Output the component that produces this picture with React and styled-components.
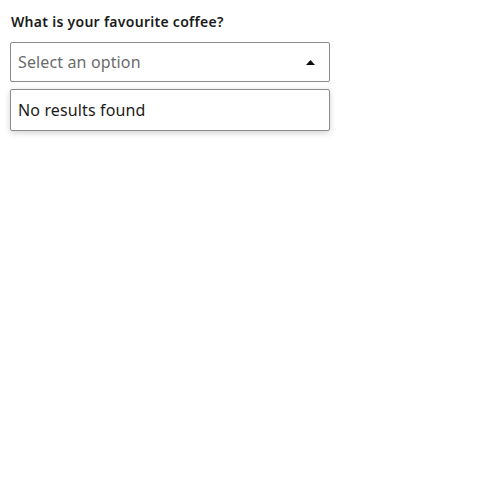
import React from "react";
import styled, { createGlobalStyle } from "styled-components";

const Global = createGlobalStyle`
  body { margin: 0; background: #fff; font-family: "Noto Sans", "Open Sans", sans-serif; }
`;

const Page = styled.div`
  padding: 12px 10px;
  width: 320px;
`;

const Label = styled.label`
  display: block;
  font-size: 14px;
  font-weight: 600;
  color: #1b1b1b;
  line-height: 20px;
  letter-spacing: 0.28px;
  margin-bottom: 10px;
  padding-left: 1px;
`;

const Control = styled.div`
  box-sizing: border-box;
  height: 40px;
  border: 1px solid #8c8c8c;
  border-radius: 2px;
  display: flex;
  align-items: center;
  justify-content: space-between;
  padding: 0 14px 0 7px;
`;

const Placeholder = styled.span`
  font-size: 16px;
  letter-spacing: 0.13px;
  color: #6b6b6b;
`;

const Menu = styled.div`
  box-sizing: border-box;
  margin-top: 7px;
  height: 42px;
  border: 1px solid #8c8c8c;
  border-radius: 2px;
  box-shadow: 0 2px 6px rgba(0, 0, 0, 0.18);
  display: flex;
  align-items: center;
  padding: 0 7px;
  font-size: 16px;
  letter-spacing: 0.13px;
  color: #1b1b1b;
`;

export default function App() {
  return (
    <>
      <Global />
      <Page>
        <Label>What is your favourite coffee?</Label>
        <Control>
          <Placeholder>Select an option</Placeholder>
          <svg width="9" height="5" viewBox="0 0 9 5">
            <path d="M0 5 L4.5 0 L9 5 Z" fill="#0b0c0c" />
          </svg>
        </Control>
        <Menu>No results found</Menu>
      </Page>
    </>
  );
}
